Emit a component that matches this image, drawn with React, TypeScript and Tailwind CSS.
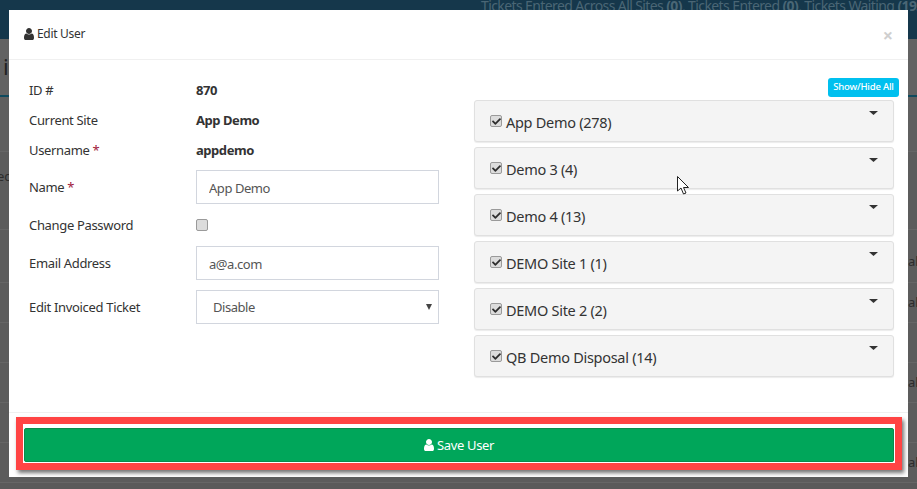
import React from "react";
import { FaCheck } from "react-icons/fa";

const FONT = "[font-family:'Noto_Sans',sans-serif]";

function UserIcon({ className }: { className: string }) {
  return (
    <svg className={className} viewBox="256 128 1280 1536" fill="currentColor">
      <path d="M1536 1399q0 109-62.5 187t-150.5 78h-854q-88 0-150.5-78t-62.5-187q0-85 8.5-160.5t31.5-151.5 58.5-130 94-88.5 134.5-34.5q131 128 313 128t313-128q76 0 134.5 34.5t94 88.5 58.5 130 31.5 151.5 8.5 160.5zm-256-887q0 159-112.5 271.5t-271.5 112.5-271.5-112.5-112.5-271.5 112.5-271.5 271.5-112.5 271.5 112.5 112.5 271.5z" />
    </svg>
  );
}

function Box({ checked }: { checked?: boolean }) {
  return (
    <span className="flex h-[12px] w-[12px] shrink-0 items-center justify-center rounded-[2px] border border-[#9a9a9a] bg-[#dcdcdc]">
      {checked && <FaCheck className="h-[9px] w-[9px] text-[#2e2e2e]" />}
    </span>
  );
}

function Row({ label, req, h, children }: { label: string; req?: boolean; h: string; children: React.ReactNode }) {
  return (
    <div className={`flex items-center ${h}`}>
      <div className="w-[167px] shrink-0 pt-[2px] text-[13px] tracking-[-0.33px] text-[#333]">
        {label}
        {req && <span className="ml-[3px] text-[#a0183c]">*</span>}
      </div>
      {children}
    </div>
  );
}

function Value({ text }: { text: string }) {
  return <b className="pt-[2px] text-[13px] tracking-[-0.45px] text-[#333]">{text}</b>;
}

const inputCls =
  "h-[34px] w-[243px] border border-[#d2d6de] bg-white px-[12px] pt-[2px] text-[13px] tracking-[-0.45px] text-[#555] outline-none";

const sites = ["App Demo (278)", "Demo 3 (4)", "Demo 4 (13)", "DEMO Site 1 (1)", "DEMO Site 2 (2)", "QB Demo Disposal (14)"];

const rowCls = "flex h-[40px] items-center justify-end border-b border-[#666] bg-[#5c5c5c] text-[13px] text-[#2c2c2c]";

export default function App() {
  return (
    <div className={`relative h-[489px] w-[917px] overflow-hidden bg-[#5a5a5a] ${FONT}`}>
      {/* page behind the dialog */}
      <div className="flex h-[39px] justify-end overflow-hidden whitespace-nowrap bg-[#15374b] text-[14px] tracking-[-0.6px] text-[#4a6675]">
        <div className="w-[436px] shrink-0 leading-[11px]">
          Tickets Entered Across All Sites <b>(0)</b>, Tickets Entered <b>(0)</b>, Tickets Waiting <b>(193)</b>
        </div>
      </div>
      <div className="flex h-[58px] items-center border-b-2 border-[#0f4a5e] bg-[#626262] pl-[3px] pb-[2px] text-[22px] text-[#222]">i</div>
      <div className="h-[55px] border-b border-[#666] bg-[#5f5f5f]" />
      <div className="flex h-[78px] items-center border-b border-[#666] bg-[#5c5c5c] text-[13px] text-[#2c2c2c]">
        <span className="ml-[-3px] mt-[-28px]">ec</span>
      </div>
      <div className="flex h-[53px] items-center justify-end border-b border-[#666] bg-[#5c5c5c] pt-[12px] text-[13px] text-[#2c2c2c]">
        <span className="w-[9px] overflow-hidden">al</span>
      </div>
      <div className={rowCls}>
        <span className="w-[9px] overflow-hidden">al</span>
      </div>
      <div className={rowCls} />
      <div className={rowCls}>
        <span className="w-[9px] overflow-hidden">al</span>
      </div>
      <div className={rowCls} />
      <div className={rowCls}>
        <span className="w-[9px] overflow-hidden">al</span>
      </div>

      {/* dialog */}
      <div className="absolute left-[9px] top-[10px] flex h-[467px] w-[899px] flex-col bg-white">
        <div className="flex h-[50px] shrink-0 items-center justify-between border-b border-[#f0f0f0] px-[15px]">
          <div className="flex items-center gap-[3px] pb-[2px] text-[12px] tracking-[-0.3px] text-[#333]">
            <UserIcon className="h-[12px] w-[10px] text-[#333]" />
            Edit User
          </div>
          <span className="text-[18px] font-bold leading-none text-[#cfcfcf]">×</span>
        </div>

        <div className="flex h-[352px] shrink-0 pl-[20px]">
          <div className="w-[445px] shrink-0 pt-[15px]">
            <Row label="ID #" h="h-[30px]">
              <Value text="870" />
            </Row>
            <Row label="Current Site" h="h-[30px]">
              <Value text="App Demo" />
            </Row>
            <Row label="Username" req h="h-[30px]">
              <Value text="appdemo" />
            </Row>
            <Row label="Name" req h="h-[44px]">
              <input className={inputCls} defaultValue="App Demo" />
            </Row>
            <Row label="Change Password" h="h-[32px]">
              <Box />
            </Row>
            <Row label="Email Address" h="h-[44px]">
              <input className={inputCls} defaultValue="a@a.com" />
            </Row>
            <Row label="Edit Invoiced Ticket" h="h-[44px]">
              <div className="relative">
                <select className={`${inputCls} appearance-none pl-[16px]`} defaultValue="Disable">
                  <option>Disable</option>
                </select>
                <svg className="absolute right-[7px] top-[14px] h-[6px] w-[6px]" viewBox="0 0 6 6">
                  <path d="M0 0h6L3 6z" fill="#444" />
                </svg>
              </div>
            </Row>
          </div>

          <div className="w-[425px] shrink-0">
            <div className="flex h-[40px] items-end justify-end pb-[3px]">
              <span className="flex h-[19px] w-[71px] items-center justify-center rounded-[3px] bg-[#00c0ef] text-[9.5px] font-medium tracking-[-0.2px] text-white">
                Show/Hide All
              </span>
            </div>
            <div className="flex w-[420px] flex-col gap-[5px]">
              {sites.map((s) => (
                <div
                  key={s}
                  className="relative flex h-[42px] items-center rounded-[3px] border border-[#e0e0e0] bg-[#f4f4f4] pl-[15px] shadow-[0_1px_1px_rgba(0,0,0,0.08)]"
                >
                  <Box checked />
                  <span className="ml-[4px] mt-[4px] text-[14.5px] tracking-[-0.28px] text-[#333]">{s}</span>
                  <svg className="absolute right-[15px] top-[10px] h-[4px] w-[9px]" viewBox="0 0 9 4">
                    <path d="M0 0h9L4.5 4z" fill="#333" />
                  </svg>
                </div>
              ))}
            </div>
          </div>
        </div>

        <div className="flex-1 border-t border-[#f0f0f0] pb-[7px] pl-[7px] pr-[6px] pt-[4px]">
          <div className="h-[53px] border-[7px] border-[#ff4444] bg-white px-px pt-[4px] shadow-[2px_3px_4px_rgba(0,0,0,0.55)]">
            <button className="flex h-[34px] w-full items-center justify-center gap-[3px] rounded-[2px] border border-[#0a8a4c] bg-[#00a65a] pt-[2px] text-[13px] tracking-[-0.35px] text-white">
              <UserIcon className="mb-[2px] h-[12px] w-[10px]" />
              Save User
            </button>
          </div>
        </div>
      </div>

      {/* mouse pointer */}
      <svg className="absolute left-[677px] top-[176px] h-[19px] w-[13px]" viewBox="0 0 13 19">
        <path d="M0.5 0.5V15L4 12L6.5 18L9 17L6.5 11.5H11.5Z" fill="#fff" stroke="#222" strokeWidth="1" />
      </svg>
    </div>
  );
}
